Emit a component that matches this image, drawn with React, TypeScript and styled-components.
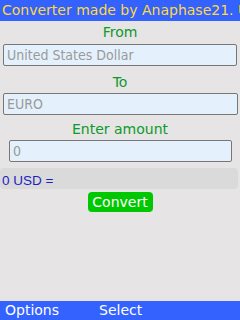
import React from "react";
import styled, { createGlobalStyle } from "styled-components";

const GlobalStyle = createGlobalStyle`
  html, body {
    margin: 0;
    padding: 0;
    background: #e6e4e4;
  }
  * {
    box-sizing: border-box;
  }
`;

const Screen = styled.div`
  width: 240px;
  height: 320px;
  display: flex;
  flex-direction: column;
  overflow: hidden;
  background: #e6e4e4;
  font-family: "DejaVu Sans", "Liberation Sans", sans-serif;
  font-size: 14px;
`;

const TitleBar = styled.div`
  height: 21px;
  line-height: 21px;
  padding-left: 2px;
  background: #3362fe;
  color: #ffd93b;
  white-space: nowrap;
  overflow: hidden;
`;

const Label = styled.div<{ $top: number; $bottom: number }>`
  margin-top: ${(p) => p.$top}px;
  margin-bottom: ${(p) => p.$bottom}px;
  height: 17px;
  line-height: 17px;
  text-align: center;
  color: #0b9a2c;
`;

const Input = styled.input<{ $left: number; $right: number }>`
  display: block;
  height: 22px;
  margin: 0 ${(p) => p.$right}px 0 ${(p) => p.$left}px;
  width: calc(100% - ${(p) => p.$left + p.$right}px);
  padding: 0 0 0 3px;
  border: 1px solid #777777;
  border-radius: 2px;
  background: #e4f1fc;
  color: #9a9a9a;
  font-family: "DejaVu Sans Condensed", "DejaVu Sans", sans-serif;
  font-stretch: condensed;
  font-size: 14px;
  outline: none;

  &::placeholder {
    color: #9a9a9a;
  }
`;

const Result = styled.div`
  margin: 6px 2px 0 0;
  height: 21px;
  line-height: 21px;
  padding: 2px 0 0 2px;
  background: #dadada;
  border-radius: 4px;
  color: #1e1ec2;
  font-family: "Liberation Sans", Arial, sans-serif;
  font-size: 13.5px;
`;

const ConvertButton = styled.button`
  align-self: center;
  margin-top: 3px;
  width: 65px;
  height: 20px;
  padding: 0;
  border: none;
  border-radius: 4px;
  background: #00c800;
  color: #ffffff;
  font-family: inherit;
  font-size: 14px;
  line-height: 20px;
`;

const SoftKeys = styled.div`
  margin-top: auto;
  height: 19px;
  line-height: 19px;
  display: flex;
  background: #3362fe;
  color: #ffffff;
`;

const SoftKey = styled.span<{ $width?: number }>`
  width: ${(p) => (p.$width ? `${p.$width}px` : "auto")};
  padding-left: 5px;
`;

export default function App() {
  return (
    <>
      <GlobalStyle />
      <Screen>
        <TitleBar>Converter made by Anaphase21. Usage</TitleBar>
        <Label $top={3} $bottom={3}>From</Label>
        <Input $left={3} $right={3} placeholder="United States Dollar" readOnly />
        <Label $top={8} $bottom={2}>To</Label>
        <Input $left={3} $right={2} placeholder="EURO" readOnly />
        <Label $top={6} $bottom={2}>Enter amount</Label>
        <Input $left={9} $right={8} placeholder="0" readOnly />
        <Result>0 USD =</Result>
        <ConvertButton>Convert</ConvertButton>
        <SoftKeys>
          <SoftKey $width={94}>Options</SoftKey>
          <SoftKey>Select</SoftKey>
        </SoftKeys>
      </Screen>
    </>
  );
}
